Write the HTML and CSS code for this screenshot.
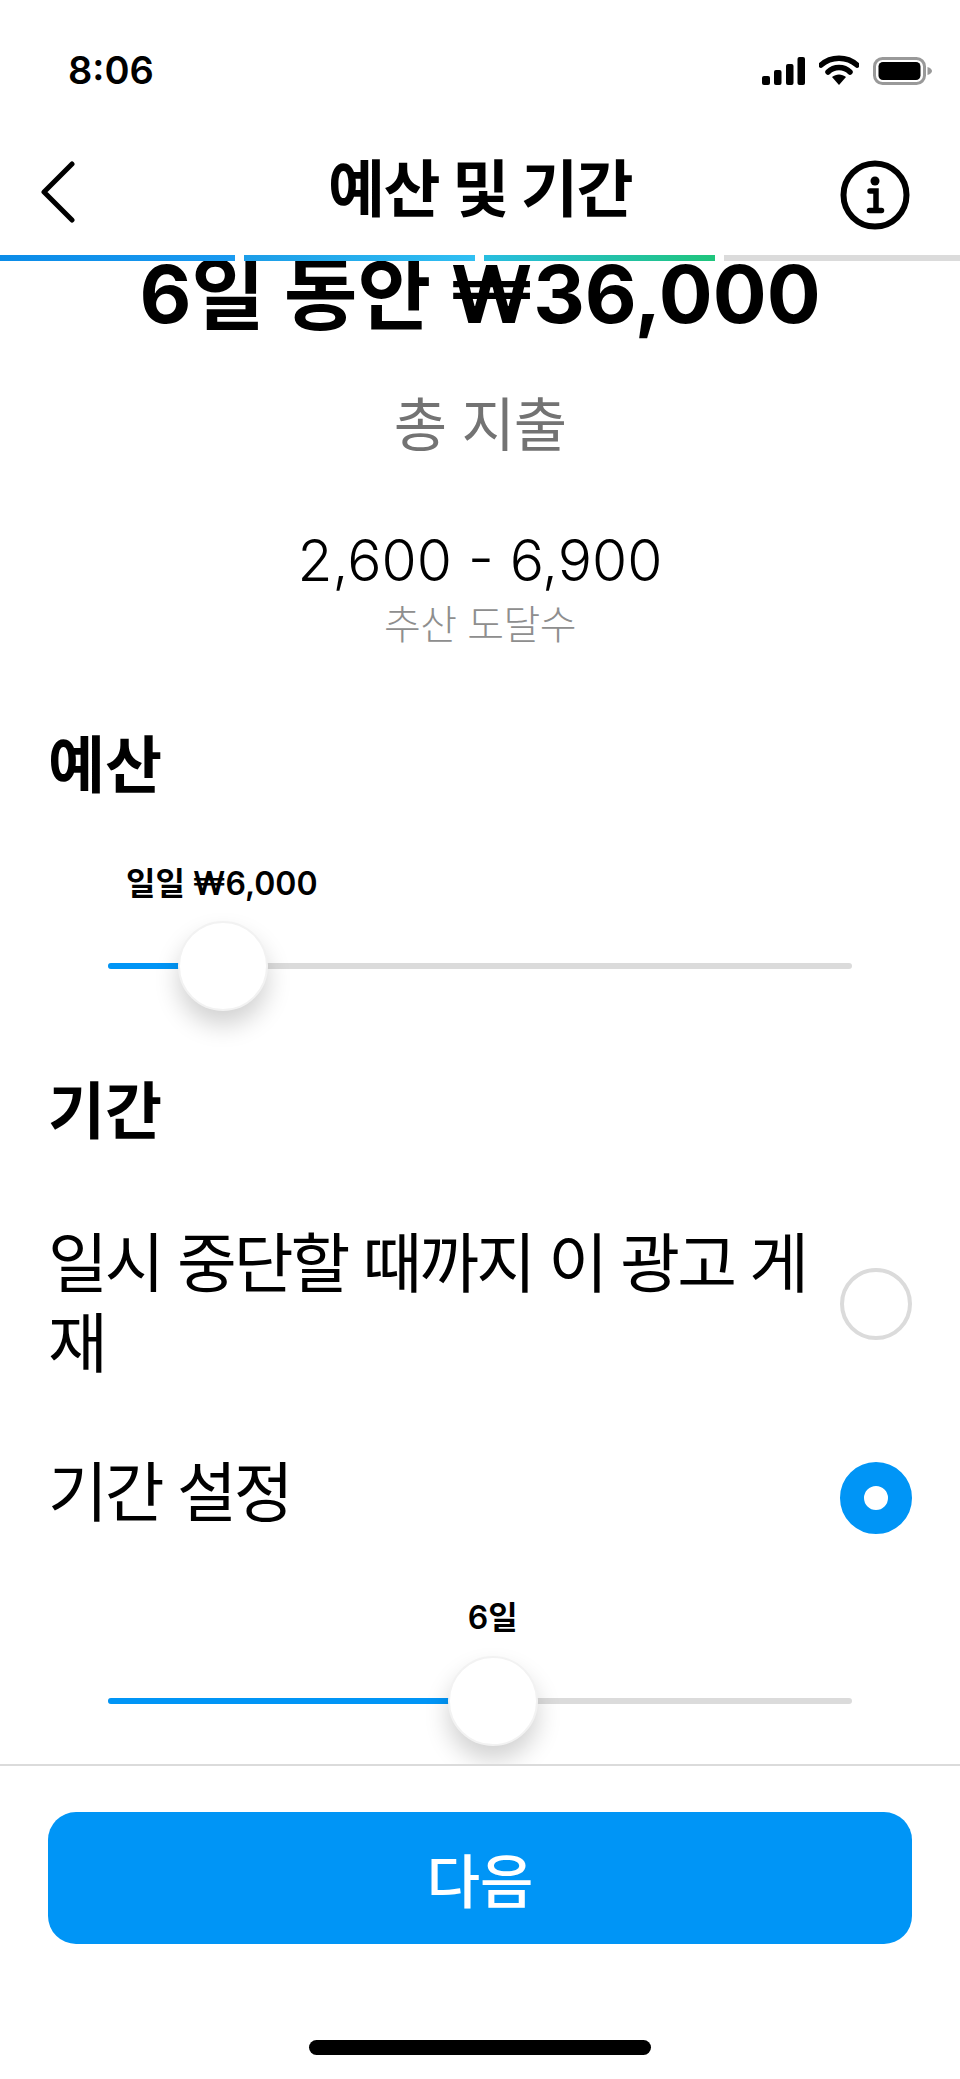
FILE: index.html
```html
<!DOCTYPE html>
<html lang="ko">
<head>
    <meta charset="UTF-8">
    <meta name="viewport" content="width=device-width, initial-scale=1.0">
    <title>예산 및 기간</title>
    <link rel="stylesheet" href="styles.css">
</head>
<body>
    <div class="app-container">
        <!-- Status bar -->
        <div class="status-bar">
            <span class="time">8:06</span>
            <div class="status-icons">
                <svg class="icon-signal" width="43" height="28" viewBox="0 0 43 28">
                    <rect x="0" y="19" width="8" height="9" rx="2"/>
                    <rect x="12" y="13" width="7.5" height="15" rx="2"/>
                    <rect x="24" y="7" width="7.5" height="21" rx="2"/>
                    <rect x="35.5" y="0" width="7.5" height="28" rx="2"/>
                </svg>
                <svg class="icon-wifi" width="40" height="30" viewBox="0 0 40 30">
                    <path d="M2 10 C12 1 28 1 38 10" fill="none" stroke="#000" stroke-width="5.5" stroke-linecap="round"/>
                    <path d="M9 17 C15 11 25 11 31 17" fill="none" stroke="#000" stroke-width="5.5" stroke-linecap="round"/>
                    <path d="M13 22 C17 18.5 23 18.5 27 22 L20 30 Z"/>
                </svg>
                <svg class="icon-battery" width="59" height="28" viewBox="0 0 59 28">
                    <rect x="1.5" y="1.5" width="50" height="25" rx="8" fill="none" stroke="#999" stroke-width="3"/>
                    <rect x="5.5" y="5" width="42" height="18" rx="4.5"/>
                    <path d="M54.5 10 C57.5 11 59 12.5 59 14 C59 15.5 57.5 17 54.5 18 Z" fill="#999"/>
                </svg>
            </div>
        </div>

        <!-- Nav header -->
        <div class="nav">
            <svg class="nav-back" width="36" height="62" viewBox="0 0 36 62">
                <path d="M32 3 L4 31 L32 59" fill="none" stroke="#000" stroke-width="5" stroke-linecap="round" stroke-linejoin="round"/>
            </svg>
            <h1>예산 및 기간</h1>
            <svg class="nav-info" width="70" height="70" viewBox="0 0 70 70">
                <circle cx="35" cy="35" r="31.5" fill="none" stroke="#000" stroke-width="6"/>
                <circle cx="35" cy="21" r="4.5"/>
                <path d="M30 31 H36 V49 M29.5 50.5 H41.5" fill="none" stroke="#000" stroke-width="5.5" stroke-linecap="round"/>
            </svg>
        </div>

        <!-- Step progress -->
        <div class="progress">
            <div class="step step-1"></div>
            <div class="step step-2"></div>
            <div class="step step-3"></div>
            <div class="step step-4"></div>
        </div>

        <!-- Scrolling content -->
        <div class="content">
            <div class="summary">
                <div class="total">6일 동안 ₩36,000</div>
                <div class="total-label">총 지출</div>
                <div class="reach">2,600 - 6,900</div>
                <div class="reach-label">추산 도달수</div>
            </div>

            <h2 class="budget-title">예산</h2>
            <div class="slider-block">
                <div class="slider-value" style="margin-left: 15.3%">일일 ₩6,000</div>
                <div class="slider">
                    <div class="slider-fill" style="width: 15.5%"></div>
                    <div class="slider-thumb" style="left: 15.5%"></div>
                </div>
            </div>

            <h2 class="duration-title">기간</h2>
            <div class="option option-first">
                <span class="option-text">일시 중단할 때까지 이 광고 게재</span>
                <span class="radio"></span>
            </div>
            <div class="option option-second">
                <span class="option-text">기간 설정</span>
                <span class="radio selected"></span>
            </div>
            <div class="slider-block days">
                <div class="slider-value" style="margin-left: 51.7%">6일</div>
                <div class="slider">
                    <div class="slider-fill" style="width: 51.7%"></div>
                    <div class="slider-thumb" style="left: 51.7%"></div>
                </div>
            </div>
        </div>

        <!-- Footer -->
        <div class="footer">
            <button class="next">다음</button>
            <div class="home-indicator"></div>
        </div>
    </div>
</body>
</html>
```

FILE: styles.css
```css
* {
    margin: 0;
    padding: 0;
    box-sizing: border-box;
}

:root {
    --primary-color: #0095f6;
    --line-color: #dbdbdb;
    --text-dark: #000;
    --text-gray: #737373;
    --text-light-gray: #8e8e8e;
}

body {
    font-family: 'Inter', 'Noto Sans CJK KR', sans-serif;
    background-color: #fff;
    color: var(--text-dark);
    overflow: hidden;
}

.app-container {
    display: flex;
    flex-direction: column;
    width: 960px;
    height: 2079px;
}

/* Status bar */
.status-bar {
    display: flex;
    justify-content: space-between;
    align-items: center;
    height: 140px;
    padding: 0 28px 0 68px;
}

.time {
    font-size: 38px;
    font-weight: 600;
}

.status-icons {
    display: flex;
    align-items: flex-end;
    gap: 14px;
}

/* Nav header */
.nav {
    display: grid;
    grid-template-columns: 1fr auto 1fr;
    align-items: center;
    height: 115px;
    padding: 0 50px 0 40px;
}

.nav-back {
    margin-bottom: 12px;
}

.nav h1 {
    margin: 0 -5px 26px 5px;
    font-size: 62px;
    font-weight: 700;
    letter-spacing: -1.5px;
}

.nav-info {
    justify-self: end;
    margin-bottom: 7px;
}

/* Step progress */
.progress {
    display: flex;
    gap: 9px;
    height: 6px;
    flex-shrink: 0;
}

.step-1 {
    width: 235px;
    background: linear-gradient(90deg, #0b8ce8, #1a9af0);
}

.step-2 {
    width: 231px;
    background: linear-gradient(90deg, #1c9de8, #30bff2);
}

.step-3 {
    width: 231px;
    background: linear-gradient(90deg, #28bde0, #1fc57c);
}

.step-4 {
    width: 236px;
    background: var(--line-color);
}

/* Scrolling content */
.content {
    flex: 1;
    overflow: hidden;
}

.summary {
    text-align: center;
}

.total {
    margin-top: -3px;
    font-size: 80px;
    font-weight: 700;
    line-height: 72px;
}

.total-label {
    margin-top: 59px;
    font-size: 58px;
    line-height: 72px;
    letter-spacing: -1px;
    color: var(--text-gray);
}

.reach {
    margin-top: 66px;
    font-size: 57px;
    font-weight: 300;
    line-height: 68px;
}

.reach-label {
    margin-top: 5px;
    font-size: 40px;
    font-weight: 300;
    line-height: 50px;
    letter-spacing: -0.5px;
    color: var(--text-light-gray);
}

h2 {
    padding-left: 48px;
    font-size: 62px;
    font-weight: 700;
    line-height: 76px;
}

.budget-title {
    margin-top: 78px;
}

.duration-title {
    margin-top: 63px;
}

/* Sliders */
.slider-block {
    margin-top: 58px;
    padding: 0 108px 42px;
}

.slider-value {
    width: max-content;
    transform: translateX(-50%);
    font-size: 32px;
    font-weight: 600;
    line-height: 44px;
}

.slider {
    position: relative;
    height: 6px;
    margin-top: 57px;
    border-radius: 3px;
    background: var(--line-color);
}

.slider-fill {
    height: 100%;
    border-radius: 3px;
    background: var(--primary-color);
}

.slider-thumb {
    position: absolute;
    top: 50%;
    width: 90px;
    height: 90px;
    transform: translate(-50%, -50%);
    border: 2px solid #f2f2f2;
    border-radius: 50%;
    background: #fff;
    box-shadow: 0 14px 24px rgba(0, 0, 0, 0.18);
}

.days {
    margin-top: 57px;
}

.days .slider {
    margin-top: 58px;
}

/* Radio options */
.option {
    display: flex;
    justify-content: space-between;
    align-items: flex-start;
    padding: 0 48px;
}

.option-first {
    margin-top: 74px;
}

.option-second {
    margin-top: 69px;
    height: 86px;
}

.option-text {
    width: 780px;
    font-size: 65px;
    line-height: 80px;
    letter-spacing: -3px;
}

.radio {
    width: 72px;
    height: 72px;
    flex-shrink: 0;
    border: 4px solid var(--line-color);
    border-radius: 50%;
}

.option-first .radio {
    margin-top: 44px;
}

.option-second .radio {
    margin-top: 9px;
}

.radio.selected {
    border: 24px solid var(--primary-color);
    background: #fff;
}

/* Footer */
.footer {
    height: 315px;
    padding: 46px 48px 0;
    border-top: 2px solid var(--line-color);
}

.next {
    display: block;
    width: 100%;
    height: 132px;
    border: none;
    border-radius: 28px;
    background: var(--primary-color);
    color: #fff;
    font-family: inherit;
    font-size: 58px;
    font-weight: 500;
}

.home-indicator {
    width: 342px;
    height: 15px;
    margin: 96px auto 0;
    border-radius: 8px;
    background: #000;
}
```
